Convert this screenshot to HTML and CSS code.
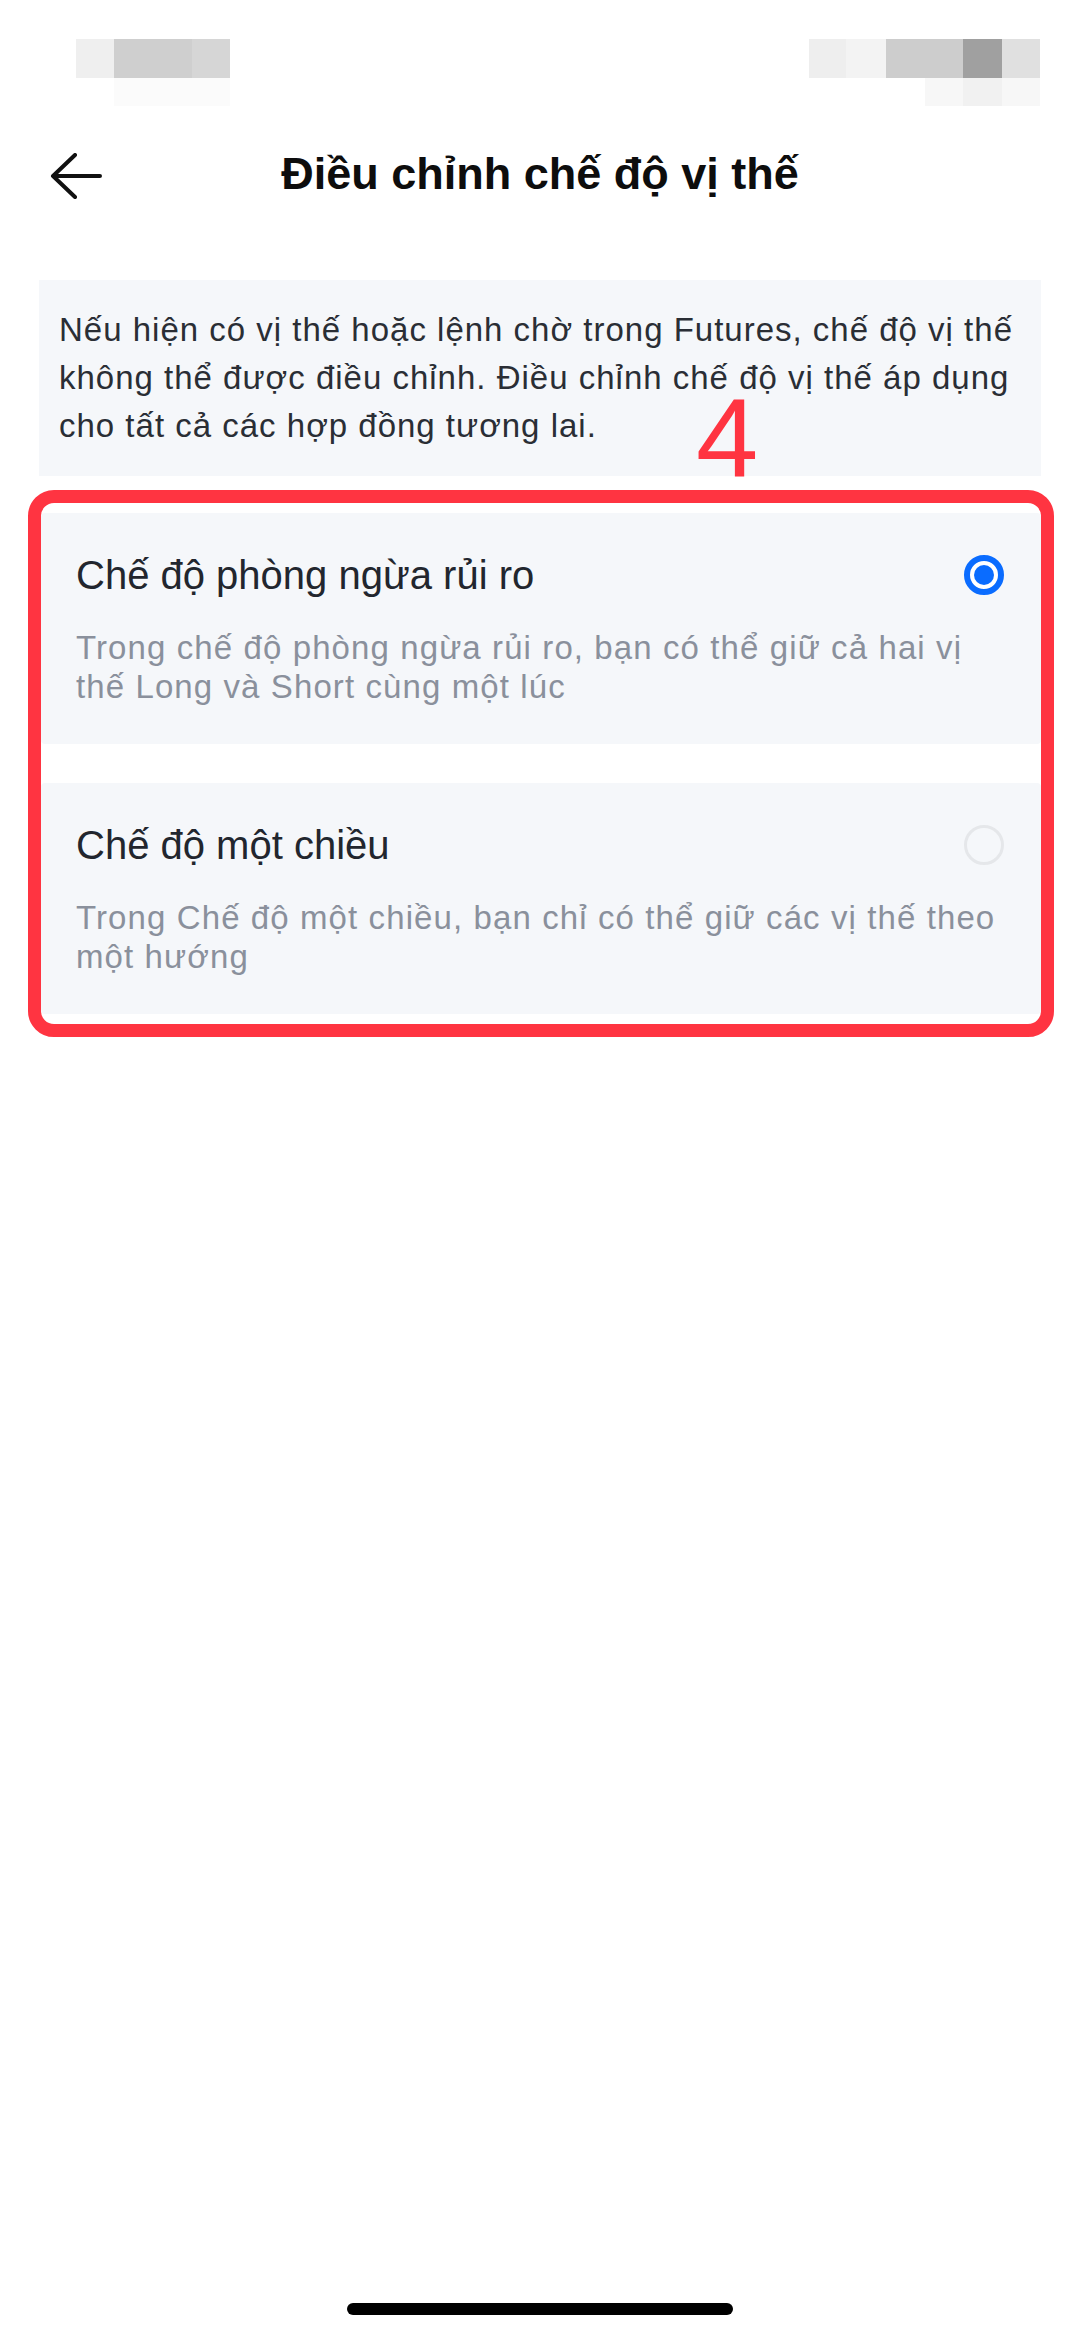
FILE: index.html
```html
<!DOCTYPE html>
<html lang="vi">
<head>
    <meta charset="UTF-8">
    <meta name="viewport" content="width=device-width, initial-scale=1.0">
    <title>Điều chỉnh chế độ vị thế</title>
    <link rel="stylesheet" href="styles.css">
</head>
<body>
    <div class="page">
        <!-- blurred status bar -->
        <div class="status-bar">
            <div class="status-left">
                <div class="px-row"></div>
                <div class="px-row"></div>
            </div>
            <div class="status-right">
                <div class="px-row"></div>
                <div class="px-row"></div>
            </div>
        </div>

        <header class="nav">
            <button class="back-button" aria-label="Quay lại">
                <svg width="52" height="46" viewBox="0 0 52 46">
                    <path d="M3 23 H50 M25 2 L3 23 L25 44" fill="none" stroke="#111" stroke-width="4" stroke-linecap="round" stroke-linejoin="round"/>
                </svg>
            </button>
            <h1 class="nav-title">Điều chỉnh chế độ vị thế</h1>
            <div></div>
        </header>

        <div class="notice">
            <p>Nếu hiện có vị thế hoặc lệnh chờ trong Futures, chế độ vị thế không thể được điều chỉnh. Điều chỉnh chế độ vị thế áp dụng cho tất cả các hợp đồng tương lai.</p>
        </div>

        <div class="step-frame">
            <div class="mode-card">
                <div class="mode-head">
                    <span class="mode-title">Chế độ phòng ngừa rủi ro</span>
                    <span class="radio radio-on"></span>
                </div>
                <p class="mode-desc">Trong chế độ phòng ngừa rủi ro, bạn có thể giữ cả hai vị thế Long và Short cùng một lúc</p>
            </div>
            <div class="mode-card">
                <div class="mode-head">
                    <span class="mode-title">Chế độ một chiều</span>
                    <span class="radio"></span>
                </div>
                <p class="mode-desc">Trong Chế độ một chiều, bạn chỉ có thể giữ các vị thế theo một hướng</p>
            </div>
        </div>

        <span class="step-number">4</span>
        <div class="home-indicator"></div>
    </div>
</body>
</html>
```

FILE: styles.css
```css
body {
    margin: 0;
    padding: 0;
    background-color: #fff;
    font-family: 'Liberation Sans', Arial, sans-serif;
}
.page {
    position: relative;
    width: 1080px;
    height: 2336px;
    overflow: hidden;
}

/* status bar (pixelated) */
.status-bar {
    display: flex;
    justify-content: space-between;
    height: 81px;
    padding: 39px 40px 0 76px;
}
.px-row {
    height: 39px;
}
.status-left .px-row {
    width: 154px;
}
.status-left .px-row:first-child {
    background: linear-gradient(to right, #efefef 0 38px, #cfcfcf 38px 116px, #d6d6d6 116px 154px);
}
.status-left .px-row:last-child {
    height: 28px;
    background: linear-gradient(to right, transparent 0 38px, #fbfbfb 38px 154px);
}
.status-right .px-row {
    width: 231px;
}
.status-right .px-row:first-child {
    background: linear-gradient(to right, #eeeeee 0 37px, #f3f3f3 37px 77px, #cdcdcd 77px 154px, #a0a0a0 154px 193px, #e0e0e0 193px 231px);
}
.status-right .px-row:last-child {
    height: 28px;
    background: linear-gradient(to right, transparent 0 116px, #f7f7f7 116px 154px, #f1f1f1 154px 193px, #f7f7f7 193px 231px);
}

/* header */
.nav {
    display: grid;
    grid-template-columns: 1fr auto 1fr;
    align-items: center;
    height: 112px;
}
.back-button {
    justify-self: start;
    display: flex;
    margin-left: 50px;
    padding: 0;
    border: none;
    background: none;
}
.nav-title {
    margin: 0;
    padding-bottom: 4px;
    font-size: 45px;
    font-weight: bold;
    color: #0d0d0d;
}

/* info box */
.notice {
    margin: 48px 39px 0;
    padding: 26px 12px 26px 20px;
    background-color: #f5f7fa;
}
.notice p {
    margin: 0;
    font-size: 33px;
    line-height: 48px;
    letter-spacing: 1px;
    color: #2a2e35;
}

/* position modes */
.step-frame {
    display: flex;
    flex-direction: column;
    gap: 39px;
    margin: 14px 26px 0 28px;
    padding: 10px 0;
    border: 13px solid #ff3441;
    border-radius: 26px;
}
.mode-card {
    padding: 38px 37px 38px 35px;
    background-color: #f5f7fa;
    border-radius: 4px;
}
.mode-head {
    display: flex;
    justify-content: space-between;
    align-items: center;
    height: 48px;
}
.mode-title {
    font-size: 40px;
    line-height: 48px;
    color: #22262e;
}
.mode-desc {
    margin: 29px 0 0;
    font-size: 33px;
    line-height: 39px;
    letter-spacing: 1.1px;
    color: #8a909c;
}
.radio {
    box-sizing: border-box;
    width: 40px;
    height: 40px;
    border: 3px solid #e5e7ea;
    border-radius: 50%;
}
.radio-on {
    display: flex;
    align-items: center;
    justify-content: center;
    border: 6px solid #0a6cff;
    background-color: #fff;
}
.radio-on::after {
    content: '';
    width: 20px;
    height: 20px;
    border-radius: 50%;
    background-color: #0a6cff;
}

/* overlays */
.step-number {
    position: absolute;
    top: 382px;
    left: 696px;
    font-size: 112px;
    line-height: 1;
    color: #ff3441;
}
.home-indicator {
    position: absolute;
    bottom: 21px;
    left: 347px;
    width: 386px;
    height: 12px;
    border-radius: 6px;
    background-color: #000;
}
```
